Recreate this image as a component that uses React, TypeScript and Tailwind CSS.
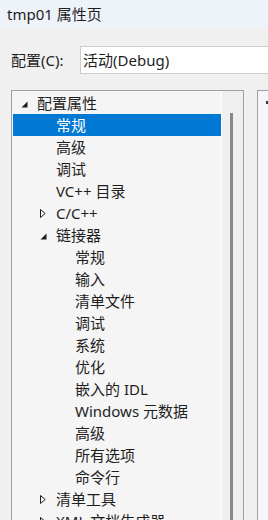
import React from "react";

type Row = { label: string; level: 0 | 1 | 2; arrow?: "open" | "closed"; selected?: boolean };

const rows: Row[] = [
  { label: "配置属性", level: 0, arrow: "open" },
  { label: "常规", level: 1, selected: true },
  { label: "高级", level: 1 },
  { label: "调试", level: 1 },
  { label: "VC++ 目录", level: 1 },
  { label: "C/C++", level: 1, arrow: "closed" },
  { label: "链接器", level: 1, arrow: "open" },
  { label: "常规", level: 2 },
  { label: "输入", level: 2 },
  { label: "清单文件", level: 2 },
  { label: "调试", level: 2 },
  { label: "系统", level: 2 },
  { label: "优化", level: 2 },
  { label: "嵌入的 IDL", level: 2 },
  { label: "Windows 元数据", level: 2 },
  { label: "高级", level: 2 },
  { label: "所有选项", level: 2 },
  { label: "命令行", level: 2 },
  { label: "清单工具", level: 1, arrow: "closed" },
  { label: "XML 文档生成器", level: 1, arrow: "closed" },
];

const padByLevel = ["pl-[8px]", "pl-[27px]", "pl-[46px]"];

function Arrow({ kind }: { kind?: "open" | "closed" }) {
  if (kind === "open") {
    return (
      <svg width="7" height="7" viewBox="0 0 7 7" className="mt-[2px]">
        <polygon points="6.5,0.5 6.5,6.5 0.5,6.5" fill="#1e1e1e" />
      </svg>
    );
  }
  if (kind === "closed") {
    return (
      <svg width="6" height="9" viewBox="0 0 6 9">
        <polygon points="0.5,0.5 5.2,4.5 0.5,8.5" fill="none" stroke="#1e1e1e" strokeWidth="1" />
      </svg>
    );
  }
  return null;
}

export default function App() {
  return (
    <div
      className="w-[268px] h-[520px] overflow-hidden bg-[#f0f0f0] text-[#1e1e1e] flex flex-col"
      style={{ fontFamily: '"Noto Sans", "Noto Sans CJK SC", sans-serif' }}
    >
      <div className="h-[28px] shrink-0 bg-[#eef2f9] pl-[7px] flex items-center text-[15px] leading-none whitespace-nowrap">
        tmp01 属性页
      </div>

      <div className="mt-[18px] h-[28px] shrink-0 flex items-center overflow-hidden">
        <div className="w-[80px] shrink-0 pl-[11px] text-[15px] leading-none whitespace-nowrap">配置(C):</div>
        <div className="w-[220px] h-[28px] shrink-0 bg-white border border-[#cccccc] flex items-center pl-[2px] text-[15px] leading-none whitespace-nowrap">
          活动(Debug)
        </div>
      </div>

      <div className="mt-[16px] flex flex-1 min-h-0">
        <div className="ml-[11px] w-[233px] shrink-0 border-l border-t border-r border-[#a0a0a0] flex">
          <div className="w-[209px] bg-[#f5f5f5] pt-[1px] pl-[1px]">
            {rows.map((r, i) => (
              <div
                key={i}
                className={
                  "h-[22px] flex items-center text-[15px] leading-none whitespace-nowrap " +
                  padByLevel[r.level] +
                  (r.selected ? " bg-[#0078d4] text-white" : "")
                }
              >
                <div className="w-[16px] shrink-0 flex items-center">
                  <Arrow kind={r.arrow} />
                </div>
                <span>{r.label}</span>
              </div>
            ))}
          </div>
          <div className="w-[1px] bg-white" />
          <div className="flex-1 bg-[#efefef] pt-[22px] pl-[8px]">
            <div className="w-[3px] h-[500px] bg-[#888888]" />
          </div>
        </div>
        <div className="ml-[13px] flex-1 border-l border-t border-[#a0a0a0] bg-[#f4f6fb] pt-[10px] pl-[8px]">
          <div className="w-[3px] h-[3px] bg-[#333333]" />
        </div>
      </div>
    </div>
  );
}
